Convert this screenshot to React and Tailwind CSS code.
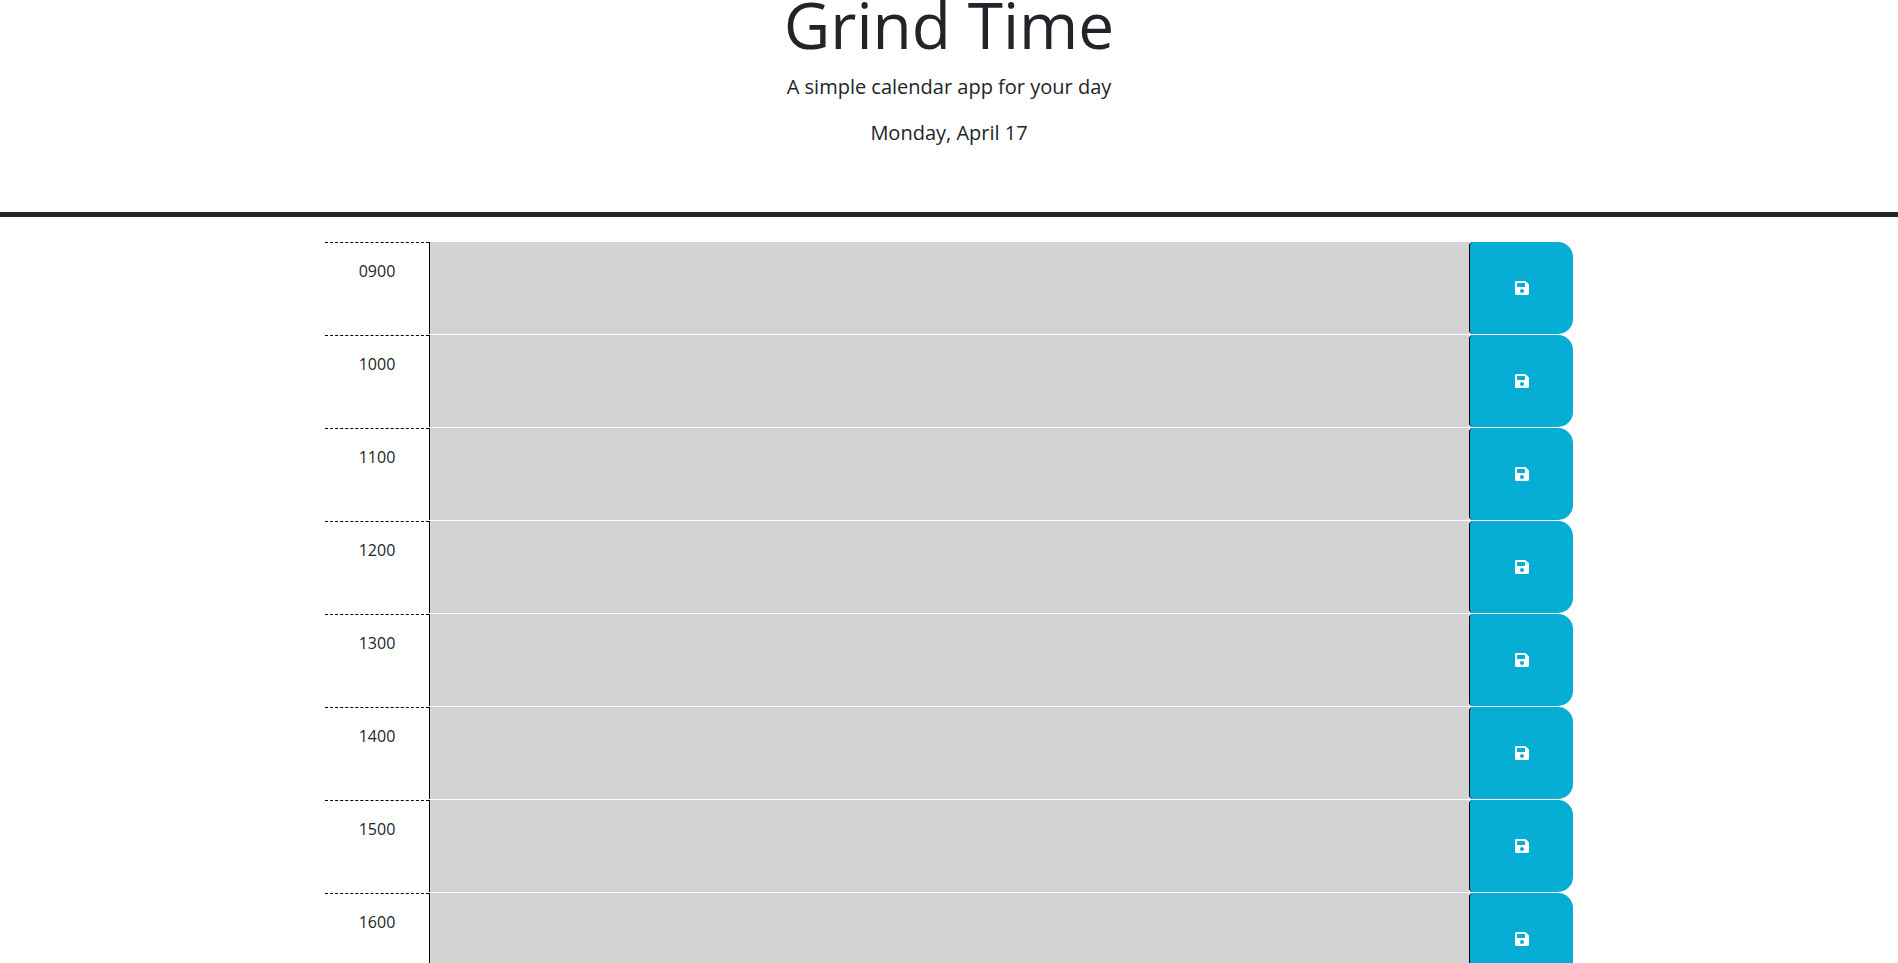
import React from "react";
import { FaSave } from "react-icons/fa";

const hours = ["0900", "1000", "1100", "1200", "1300", "1400", "1500", "1600"];

function TimeBlock({ hour }) {
  const id = `hour-${hour}`;
  return (
    <div className="grid h-[93px] grid-cols-12">
      <label
        htmlFor={id}
        className="border-t border-dashed border-black py-4 text-center text-base leading-6"
      >
        {hour}
      </label>
      <textarea
        id={id}
        className="col-span-10 mb-px resize-none border-l border-black bg-[#d3d3d3] px-3 py-1 text-base text-black outline-none"
      />
      <button
        type="button"
        aria-label={`Save ${hour}`}
        className="mb-px flex cursor-pointer items-center justify-center rounded-l rounded-r-[15px] border-l border-black bg-[#06aed5] text-base text-white"
      >
        <FaSave aria-hidden="true" />
      </button>
    </div>
  );
}

export default function App() {
  return (
    <div className="h-screen overflow-hidden bg-white font-['Open_Sans',sans-serif] text-[#212529]">
      <header className="flex flex-col items-center border-b-5 border-[#22252a] pb-16 text-center">
        <h1 className="text-[64px] leading-[50px]">Grind Time</h1>
        <p className="mt-[22px] text-xl leading-[30px]">
          A simple calendar app for your day
        </p>
        <p className="mt-4 text-xl leading-[30px]">Monday, April 17</p>
      </header>
      <main className="mx-auto mt-[25px] max-w-[1248px]">
        {hours.map((hour) => (
          <TimeBlock key={hour} hour={hour} />
        ))}
      </main>
    </div>
  );
}
